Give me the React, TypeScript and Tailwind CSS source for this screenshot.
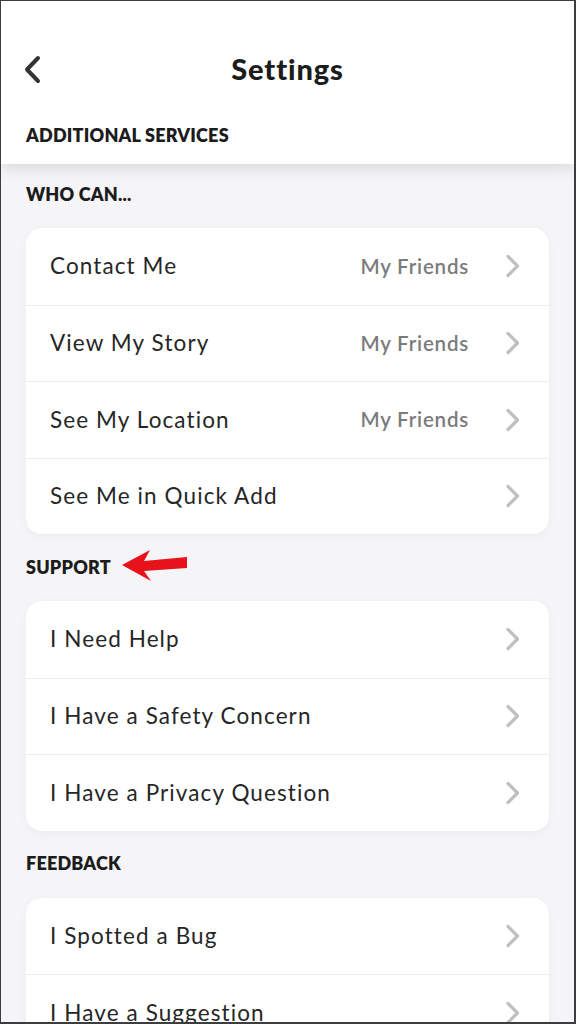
import React from "react";

const font = { fontFamily: '"Lato", "Noto Sans", sans-serif' };

function Chevron() {
  return (
    <svg width="16" height="24" viewBox="0 0 16 24" fill="none" className="shrink-0">
      <path d="M3 2.5 L12.5 12 L3 21.5" stroke="#c0c0c2" strokeWidth="3.2" strokeLinecap="round" strokeLinejoin="round" />
    </svg>
  );
}

type Row = { label: string; value?: string };

function Card({ rows }: { rows: Row[] }) {
  return (
    <div className="mx-[25px] rounded-[16px] bg-white shadow-[0_2px_10px_rgba(0,0,0,0.04)] overflow-hidden">
      {rows.map((r, i) => (
        <div
          key={r.label}
          className={
            "flex h-[76.5px] items-center pl-[24px] pr-[28px] " +
            (i > 0 ? "border-t border-[#ececee]" : "")
          }
        >
          <span className="flex-1 text-[22.5px] text-[#262626] tracking-[1.1px]">{r.label}</span>
          {r.value && (
            <span className="mr-[36px] text-[20.5px] font-semibold text-[#7b7b7d] tracking-[0.8px]">{r.value}</span>
          )}
          <Chevron />
        </div>
      ))}
    </div>
  );
}

function Label({ children, extra }: { children: React.ReactNode; extra?: React.ReactNode }) {
  return (
    <div className="relative flex h-[24px] items-center px-[25px]">
      <span className="text-[18px] font-extrabold tracking-[0.2px] text-[#1c1c1c]">{children}</span>
      {extra}
    </div>
  );
}

function RedArrow() {
  return (
    <svg width="70" height="36" viewBox="0 0 70 36" className="absolute left-[118px] top-[-8px]">
      <polygon points="3,18 31,3 25,14 68,10 68,21 25,24 32,34" fill="#e8121a" />
    </svg>
  );
}

export default function App() {
  return (
    <div style={font} className="relative h-[1024px] w-[576px] overflow-hidden bg-[#f5f5f8] border-l border-t border-r-2 border-b-2 border-[#3d3d3f]">
      <div className="relative z-10 bg-white pt-[48px] pb-[17px] shadow-[0_4px_14px_rgba(0,0,0,0.12)]">
        <div className="relative flex h-[40px] items-center justify-center">
          <svg width="20" height="30" viewBox="0 0 20 30" className="absolute left-[22px] top-[6px]" fill="none">
            <path d="M15 3 L4 14.5 L15 26" stroke="#333335" strokeWidth="4" strokeLinecap="round" strokeLinejoin="round" />
          </svg>
          <span className="text-[29px] font-black text-[#1c1c1c] tracking-[0.9px]">Settings</span>
        </div>
        <div className="mt-[34px]">
          <Label>ADDITIONAL SERVICES</Label>
        </div>
      </div>
      <div className="pt-[18px]">
        <Label>WHO CAN...</Label>
        <div className="mt-[22px]">
          <Card
            rows={[
              { label: "Contact Me", value: "My Friends" },
              { label: "View My Story", value: "My Friends" },
              { label: "See My Location", value: "My Friends" },
              { label: "See Me in Quick Add" },
            ]}
          />
        </div>
        <div className="mt-[21px]">
          <Label extra={<RedArrow />}>SUPPORT</Label>
        </div>
        <div className="mt-[22px]">
          <Card
            rows={[
              { label: "I Need Help" },
              { label: "I Have a Safety Concern" },
              { label: "I Have a Privacy Question" },
            ]}
          />
        </div>
        <div className="mt-[21px]">
          <Label>FEEDBACK</Label>
        </div>
        <div className="mt-[22px]">
          <Card rows={[{ label: "I Spotted a Bug" }, { label: "I Have a Suggestion" }]} />
        </div>
      </div>
    </div>
  );
}
